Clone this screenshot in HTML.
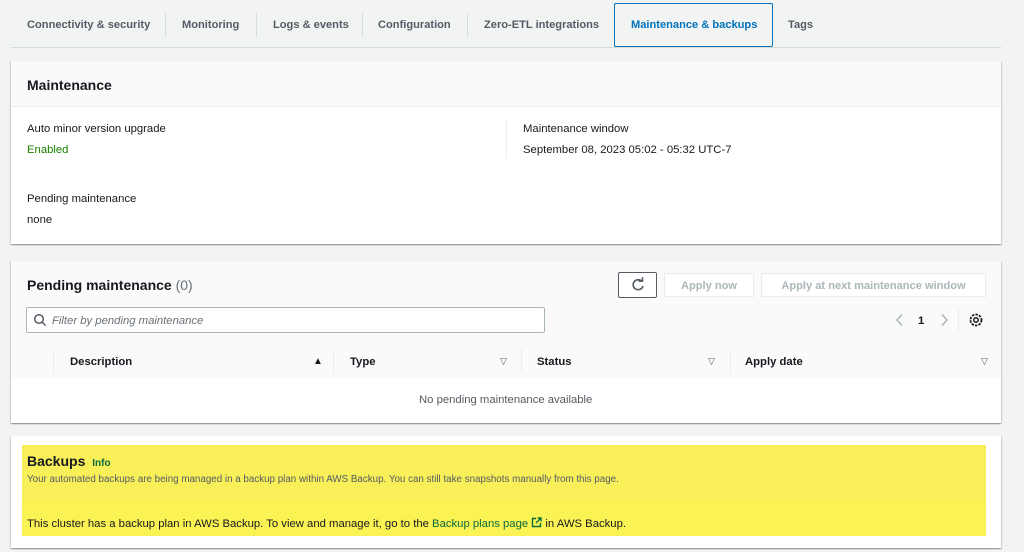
<!DOCTYPE html>
<html><head><meta charset="utf-8"><style>
*{margin:0;padding:0;box-sizing:border-box}
body{width:1024px;height:552px;background:#f2f3f3;font-family:"Liberation Sans",Arial,sans-serif;color:#16191f;position:relative;overflow:hidden;font-size:11.3px}
.a{position:absolute;white-space:nowrap}
.t{padding-top:1px}
.tab{position:absolute;top:19px;font-weight:bold;font-size:11.1px;color:#545b64}
.sep{position:absolute;top:13px;width:1px;height:24px;background:#d5dbdb}
.card{position:absolute;left:11px;width:990px;background:#fff;box-shadow:0 1px 1px rgba(0,28,36,.3),1px 1px 1px rgba(0,28,36,.12),-1px 1px 1px rgba(0,28,36,.12)}
.btn{position:absolute;border:1px solid #e9ebed;background:#fff;color:#aab7b8;font-weight:bold;font-size:11.1px;text-align:center;line-height:24px;top:273px;height:24px}
.th{position:absolute;top:356px;font-weight:bold;font-size:11.3px;color:#16191f}
.tri{position:absolute;top:356px;font-size:9px;color:#545b64}
.vs{position:absolute;top:349px;width:1px;height:24px;background:#eaeded}
</style></head><body>
<div class="a" style="left:11px;top:47px;width:990px;height:1px;background:#d5dbdb"></div>
<div class="tab" style="left:27px">Connectivity &amp; security</div>
<div class="sep" style="left:165px"></div>
<div class="tab" style="left:182px">Monitoring</div>
<div class="sep" style="left:256px"></div>
<div class="tab" style="left:273px">Logs &amp; events</div>
<div class="sep" style="left:362px"></div>
<div class="tab" style="left:378px">Configuration</div>
<div class="sep" style="left:467px"></div>
<div class="tab" style="left:484px">Zero-ETL integrations</div>
<div class="a" style="left:614px;top:3px;width:159px;height:44px;border:1px solid #0073bb;border-radius:2px"></div>
<div class="tab" style="left:631px;color:#0073bb">Maintenance &amp; backups</div>
<div class="tab" style="left:788px">Tags</div>

<div class="card" style="top:61px;height:183px">
 <div class="a" style="left:0;top:0;width:990px;height:46px;background:#fafafa;border-bottom:1px solid #eaeded"></div>
 <div class="a" style="left:16px;top:16px;font-size:14px;font-weight:bold">Maintenance</div>
 <div class="a t" style="left:16px;top:61px">Auto minor version upgrade</div>
 <div class="a t" style="left:16px;top:82px;color:#1d8102">Enabled</div>
 <div class="a" style="left:495px;top:58px;width:1px;height:40px;background:#eaeded"></div>
 <div class="a t" style="left:512px;top:61px">Maintenance window</div>
 <div class="a t" style="left:512px;top:82px">September 08, 2023 05:02 - 05:32 UTC-7</div>
 <div class="a t" style="left:16px;top:131px">Pending maintenance</div>
 <div class="a t" style="left:16px;top:152px">none</div>
</div>

<div class="card" style="top:261px;height:162px;background:#fafafa">
 <div class="a" style="left:0;top:117px;width:990px;height:45px;background:#fff"></div>
</div>
<div class="a" style="left:27px;top:277px;font-size:14px;font-weight:bold">Pending maintenance <span style="font-weight:normal;color:#687078">(0)</span></div>
<div class="a" style="left:618px;top:272px;width:39px;height:26px;border:1px solid #545b64;border-radius:2px;background:#fff">
<svg width="37" height="24" viewBox="0 0 37 24"><path d="M23 8.5A5 5 0 1 0 24 13" fill="none" stroke="#545b64" stroke-width="1.6"/><path d="M19.5 8.2h4v-4" fill="none" stroke="#545b64" stroke-width="1.6"/></svg></div>
<div class="btn" style="left:664px;width:90px">Apply now</div>
<div class="btn" style="left:761px;width:225px">Apply at next maintenance window</div>
<div class="a" style="left:26px;top:307px;width:519px;height:26px;border:1px solid #aab7b8;border-radius:2px;background:#fff"></div>
<svg class="a" style="left:33px;top:313px" width="14" height="14" viewBox="0 0 14 14"><circle cx="6" cy="6" r="4.3" fill="none" stroke="#545b64" stroke-width="1.5"/><path d="M9 9l3.5 3.5" stroke="#545b64" stroke-width="1.5"/></svg>
<div class="a" style="left:52px;top:315px;font-style:italic;color:#687078">Filter by pending maintenance</div>
<svg class="a" style="left:895px;top:313px" width="10" height="14" viewBox="0 0 10 14"><path d="M7 1.5L2 7l5 5.5" fill="none" stroke="#aab7b8" stroke-width="1.5"/></svg>
<div class="a" style="left:918px;top:315px;font-weight:bold">1</div>
<svg class="a" style="left:939px;top:313px" width="10" height="14" viewBox="0 0 10 14"><path d="M3 1.5L8 7l-5 5.5" fill="none" stroke="#aab7b8" stroke-width="1.5"/></svg>
<div class="a" style="left:958px;top:309px;width:1px;height:22px;background:#eaeded"></div>
<svg class="a" style="left:968px;top:312px" width="16" height="16" viewBox="0 0 16 16"><circle cx="8" cy="8" r="2.2" fill="none" stroke="#16191f" stroke-width="1.5"/><circle cx="8" cy="8" r="5.5" fill="none" stroke="#16191f" stroke-width="1.8" stroke-dasharray="2.4 1.2"/></svg>
<div class="vs" style="left:53px"></div>
<div class="th" style="left:70px">Description</div>
<div class="a" style="left:313px;top:356px;font-size:10px">&#9650;</div>
<div class="vs" style="left:333px"></div>
<div class="th" style="left:350px">Type</div>
<div class="tri" style="left:500px">&#9661;</div>
<div class="vs" style="left:521px"></div>
<div class="th" style="left:537px">Status</div>
<div class="tri" style="left:708px">&#9661;</div>
<div class="vs" style="left:730px"></div>
<div class="th" style="left:745px">Apply date</div>
<div class="tri" style="left:981px">&#9661;</div>
<div class="a" style="left:419px;top:394px;color:#545b64">No pending maintenance available</div>

<div class="card" style="top:436px;height:112px"></div>
<div class="a" style="left:22px;top:445px;width:964px;height:57px;background:#f8ef59"></div>
<div class="a" style="left:22px;top:502px;width:964px;height:34px;background:#fbf254"></div>
<div class="a" style="left:27px;top:453px;font-size:14px;font-weight:bold">Backups <span style="font-size:10px;color:#0b6b3a;margin-left:3px">Info</span></div>
<div class="a" style="left:27px;top:474px;font-size:9.8px;color:#545b64">Your automated backups are being managed in a backup plan within AWS Backup. You can still take snapshots manually from this page.</div>
<div class="a" style="left:27px;top:517px;font-size:11.3px">This cluster has a backup plan in AWS Backup. To view and manage it, go to the <span style="color:#0b6b3a">Backup plans page <svg width="11" height="11" viewBox="0 0 11 11" style="vertical-align:-1px"><path d="M5 1.5H1.5v8h8V6M6.5 1h3.5v3.5M10 1L5 6" fill="none" stroke="#0b6b3a" stroke-width="1.4"/></svg></span> in AWS Backup.</div>
</body></html>
